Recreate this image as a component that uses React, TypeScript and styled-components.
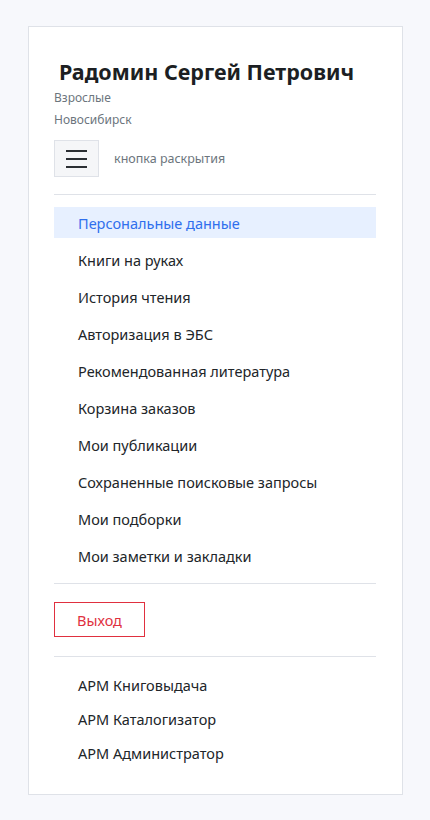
import React from "react";
import styled, { createGlobalStyle } from "styled-components";

const GlobalStyle = createGlobalStyle`
  html, body {
    margin: 0;
    padding: 0;
    background: #f7f8fc;
  }
  body {
    font-family: "Noto Sans", "Open Sans", Arial, sans-serif;
    color: #212529;
  }
`;

const Page = styled.div`
  padding: 26px 27px 25px 28px;
`;

const Card = styled.div`
  background: #fff;
  border: 1px solid #dfe2e8;
  padding: 30px 26px 26px 25px;
`;

const Name = styled.h1`
  margin: 0 0 1px 5px;
  font-size: 21.5px;
  line-height: 29px;
  font-weight: 700;
  color: #1c1f23;
`;

const Meta = styled.div`
  font-size: 12px;
  line-height: 22px;
  color: #6c757d;
`;

const ToggleRow = styled.div`
  display: flex;
  align-items: center;
  gap: 15px;
  margin-top: 9px;
`;

const Burger = styled.button`
  width: 45px;
  height: 37px;
  padding: 0;
  background: #f5f6f8;
  border: 1px solid #dfe2e8;
  display: flex;
  flex-direction: column;
  align-items: center;
  justify-content: center;
  gap: 6px;
  cursor: pointer;

  span {
    display: block;
    width: 21px;
    height: 2px;
    background: #2b2f33;
  }
`;

const ToggleLabel = styled.span`
  font-size: 12.5px;
  color: #6c757d;
`;

const Divider = styled.hr<{ $top: number; $bottom: number }>`
  border: none;
  border-top: 1px solid #dfe2e8;
  margin: ${(p) => `${p.$top}px 0 ${p.$bottom}px`};
`;

const Menu = styled.ul<{ $gap: number }>`
  list-style: none;
  margin: 0;
  padding: 0;
  display: flex;
  flex-direction: column;
  gap: ${(p) => p.$gap}px;
`;

const Item = styled.li<{ $active?: boolean; $height: number }>`
  height: ${(p) => p.$height}px;
  display: flex;
  align-items: center;
  padding-left: 24px;
  font-size: 14.5px;
  color: ${(p) => (p.$active ? "#2f6fed" : "#212529")};
  background: ${(p) => (p.$active ? "#e7f0ff" : "transparent")};
  cursor: pointer;
`;

const Logout = styled.button`
  width: 91px;
  height: 35px;
  padding: 0;
  background: #fff;
  border: 1px solid #e0303f;
  color: #e0303f;
  font-family: inherit;
  font-size: 14.5px;
  cursor: pointer;
`;

const menu = [
  "Персональные данные",
  "Книги на руках",
  "История чтения",
  "Авторизация в ЭБС",
  "Рекомендованная литература",
  "Корзина заказов",
  "Мои публикации",
  "Сохраненные поисковые запросы",
  "Мои подборки",
  "Мои заметки и закладки",
];

const workplaces = ["АРМ Книговыдача", "АРМ Каталогизатор", "АРМ Администратор"];

export default function App() {
  return (
    <>
      <GlobalStyle />
      <Page>
        <Card>
          <Name>Радомин Сергей Петрович</Name>
          <Meta>Взрослые</Meta>
          <Meta>Новосибирск</Meta>
          <ToggleRow>
            <Burger aria-label="Меню">
              <span />
              <span />
              <span />
            </Burger>
            <ToggleLabel>кнопка раскрытия</ToggleLabel>
          </ToggleRow>
          <Divider $top={17} $bottom={12} />
          <Menu $gap={6}>
            {menu.map((m, i) => (
              <Item key={m} $active={i === 0} $height={31}>
                {m}
              </Item>
            ))}
          </Menu>
          <Divider $top={12} $bottom={18} />
          <Logout>Выход</Logout>
          <Divider $top={19} $bottom={12} />
          <Menu $gap={3}>
            {workplaces.map((m) => (
              <Item key={m} $height={31}>
                {m}
              </Item>
            ))}
          </Menu>
        </Card>
      </Page>
    </>
  );
}
